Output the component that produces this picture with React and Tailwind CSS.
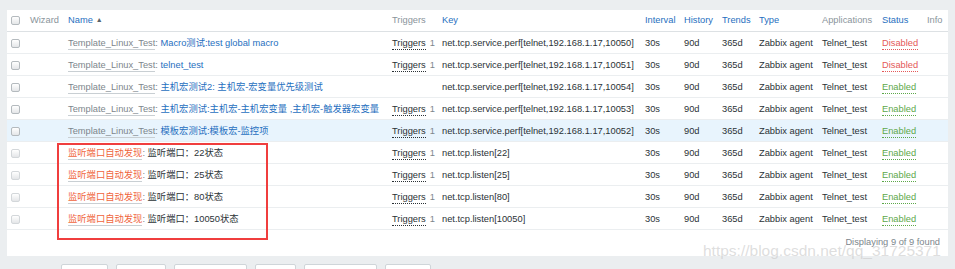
const cols = "grid grid-cols-[19px_38px_324px_50px_203px_39px_38px_37px_63px_60px_45px_24px]";

const rows = [
  { tpl: "Template_Linux_Test", name: "Macro测试:test global macro", triggers: true, key: "net.tcp.service.perf[telnet,192.168.1.17,10050]", status: "Disabled" },
  { tpl: "Template_Linux_Test", name: "telnet_test", triggers: true, key: "net.tcp.service.perf[telnet,192.168.1.17,10051]", status: "Disabled" },
  { tpl: "Template_Linux_Test", name: "主机宏测试2: 主机宏-宏变量优先级测试", triggers: false, key: "net.tcp.service.perf[telnet,192.168.1.17,10054]", status: "Enabled" },
  { tpl: "Template_Linux_Test", name: "主机宏测试:主机宏-主机宏变量 ,主机宏-触发器宏变量", triggers: true, key: "net.tcp.service.perf[telnet,192.168.1.17,10053]", status: "Enabled" },
  { tpl: "Template_Linux_Test", name: "模板宏测试:模板宏-监控项", triggers: true, key: "net.tcp.service.perf[telnet,192.168.1.17,10052]", status: "Enabled", hl: true },
  { disc: "监听端口自动发现", name: "监听端口：22状态", triggers: true, key: "net.tcp.listen[22]", status: "Enabled" },
  { disc: "监听端口自动发现", name: "监听端口：25状态", triggers: true, key: "net.tcp.listen[25]", status: "Enabled" },
  { disc: "监听端口自动发现", name: "监听端口：80状态", triggers: true, key: "net.tcp.listen[80]", status: "Enabled" },
  { disc: "监听端口自动发现", name: "监听端口：10050状态", triggers: true, key: "net.tcp.listen[10050]", status: "Enabled" },
];

function Check({ light }) {
  return (
    <span
      className={
        "block w-[9px] h-[9px] rounded-[2px] border bg-gradient-to-b from-white to-[#e4e6e8] " +
        (light ? "border-[#d3d7da]" : "border-[#b4babe]")
      }
    />
  );
}

function Cell({ children, className = "" }) {
  return <div className={"flex items-center pl-[4px] whitespace-nowrap overflow-visible " + className}>{children}</div>;
}

export default function App() {
  return (
    <div className="relative h-[269px] w-[955px] overflow-hidden bg-[#ebeef0] pt-[10px] px-[7px] font-['Liberation_Sans','Noto_Sans_CJK_SC',sans-serif] text-[9.3px] text-[#2b3236]">
      <div className="bg-white">
        <div className={cols + " h-[22px] border-b border-[#dde1e4]"}>
          <Cell><Check /></Cell>
          <Cell className="text-[#8a949b]">Wizard</Cell>
          <Cell className="text-[#1f6fc0]">
            Name <span className="ml-[3px] text-[7px] text-[#59646b]">▲</span>
          </Cell>
          <Cell className="text-[#8a949b]">Triggers</Cell>
          <Cell className="text-[#1f6fc0]">Key</Cell>
          <Cell className="text-[#1f6fc0]">Interval</Cell>
          <Cell className="text-[#1f6fc0]">History</Cell>
          <Cell className="text-[#1f6fc0]">Trends</Cell>
          <Cell className="text-[#1f6fc0]">Type</Cell>
          <Cell className="text-[#8a949b]">Applications</Cell>
          <Cell className="text-[#1f6fc0]">Status</Cell>
          <Cell className="text-[#8a949b]">Info</Cell>
        </div>

        {rows.map((r, i) => (
          <div key={i} className={cols + " h-[22px] pt-[2px] border-b border-[#ebeef0] " + (r.hl ? "bg-[#e8f4fd]" : "")}>
            <Cell><Check light={!!r.disc} /></Cell>
            <Cell />
            <Cell>
              {r.tpl ? (
                <>
                  <span className="text-[#7d868c] border-b border-[#c9cfd3] leading-[11px]">{r.tpl}</span>
                  <span className="text-[#7d868c]">:&nbsp;</span>
                  <span className="text-[#1f6fc0]">{r.name}</span>
                </>
              ) : (
                <>
                  <span className="text-[#f0653d] border-b border-[#c9cfd3] leading-[11px]">{r.disc}</span>
                  <span className="text-[#7d868c]">:&nbsp;</span>
                  <span>{r.name}</span>
                </>
              )}
            </Cell>
            <Cell>
              {r.triggers && (
                <>
                  <span className="border-b border-dotted border-[#2b3236] leading-[11px]">Triggers</span>
                  <span className="ml-[4px] text-[#7d868c]">1</span>
                </>
              )}
            </Cell>
            <Cell>{r.key}</Cell>
            <Cell>30s</Cell>
            <Cell>90d</Cell>
            <Cell>365d</Cell>
            <Cell>Zabbix agent</Cell>
            <Cell>Telnet_test</Cell>
            <Cell>
              <span
                className={
                  "border-b border-dotted leading-[11px] " +
                  (r.status === "Disabled" ? "text-[#e45959] border-[#e45959]" : "text-[#5da84a] border-[#5da84a]")
                }
              >
                {r.status}
              </span>
            </Cell>
            <Cell />
          </div>
        ))}

        <div className="h-[26px] flex items-center justify-end pr-[8px] pb-[1px] text-[#7d868c]">
          Displaying 9 of 9 found
        </div>
      </div>

      <div className="flex gap-[8px] mt-[8px] ml-[54px]">
        {[47, 50, 73, 41, 73, 46].map((w, i) => (
          <div key={i} style={{ width: w }} className="h-[20px] rounded-[2px] border border-[#cfd5d9] bg-white" />
        ))}
      </div>

      <div className="absolute left-[57px] top-[143px] w-[211px] h-[97px] border-2 border-[#f03e3e]" />

      <div className="absolute left-[703px] top-[242px] text-[15.5px] leading-[17px] text-[#cfcfcf]/70 whitespace-nowrap">
        https://blog.csdn.net/qq_31725371
      </div>
    </div>
  );
}
